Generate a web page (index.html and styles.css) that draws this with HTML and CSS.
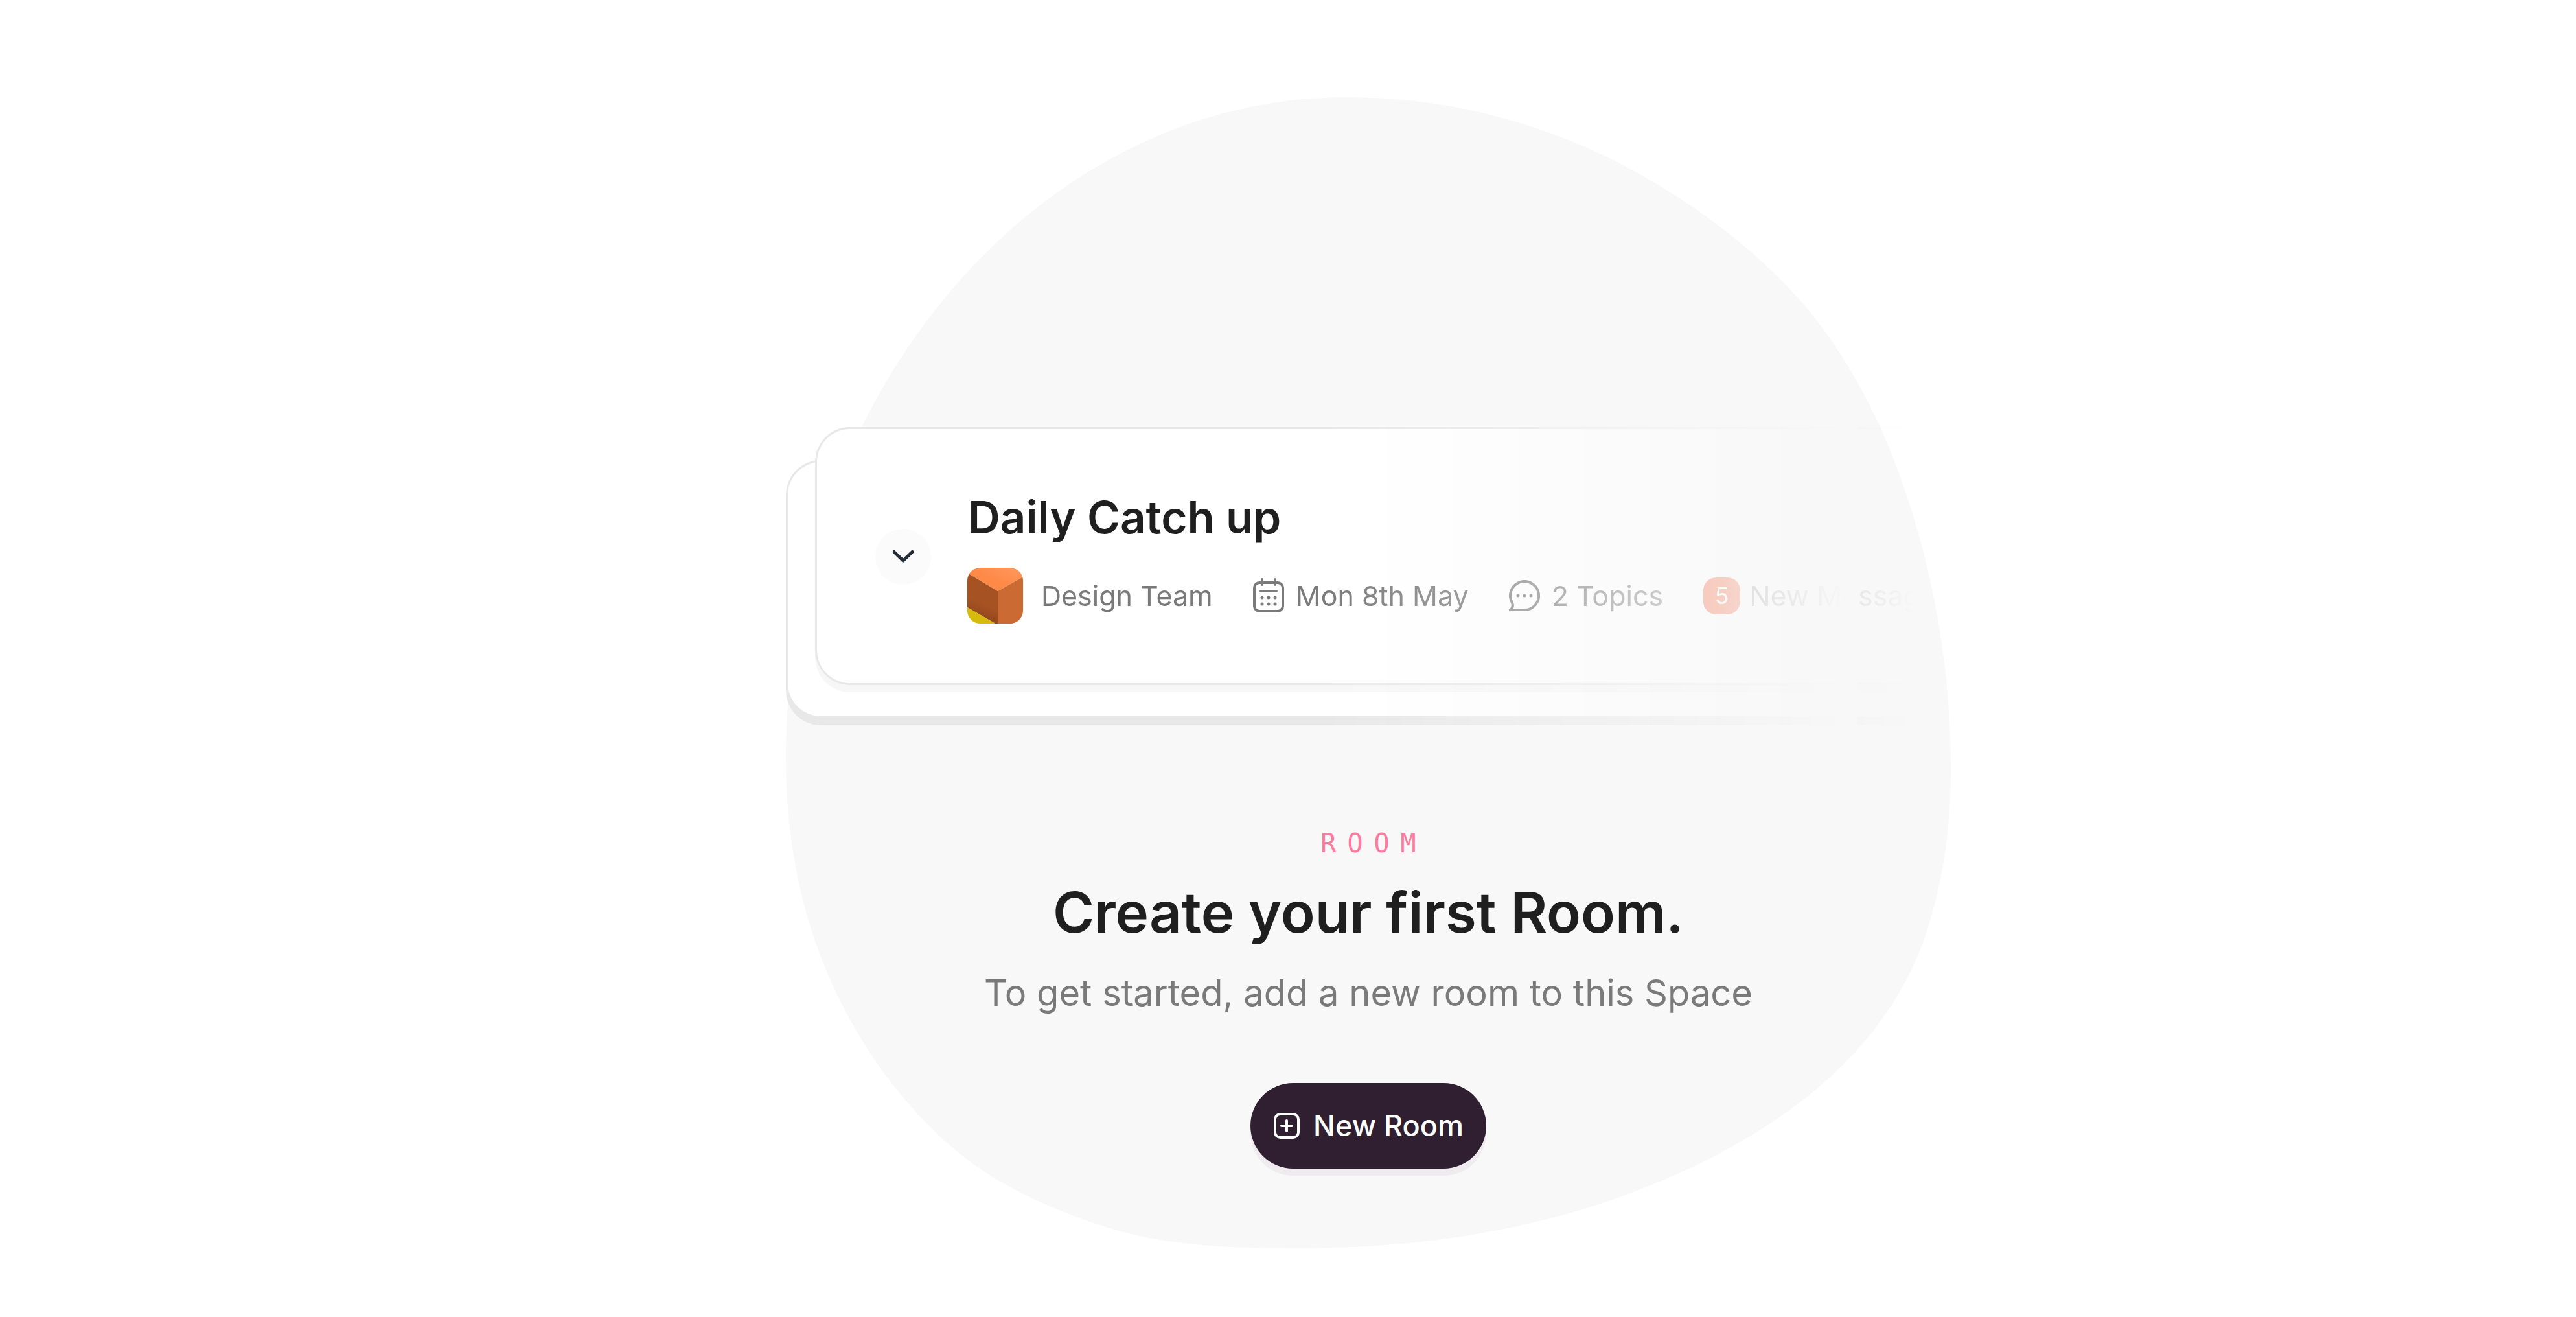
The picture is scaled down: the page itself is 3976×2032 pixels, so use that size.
FILE: index.html
```html
<!DOCTYPE html>
<html lang="en">
<head>
<meta charset="utf-8">
<title>Create your first Room</title>
<link rel="stylesheet" href="styles.css">
</head>
<body>
<main class="page">
  <section class="empty-state">
    <svg class="blob" viewBox="1213 150 1798 1776" preserveAspectRatio="none" aria-hidden="true">
      <path d="M2079 150C2225 150 2370 185 2500 252C2607 308 2708 381 2787 473C2834 529 2872 594 2903 660C2975 826 3011 1006 3011 1187C3011 1273 3000 1358 2973 1440C2940 1541 2871 1628 2787 1694C2701 1761 2603 1810 2500 1847C2341 1904 2170 1926 2001 1926C1899 1926 1797 1923 1700 1891C1616 1863 1533 1826 1467 1768C1368 1681 1295 1565 1254 1440C1226 1354 1213 1262 1213 1172C1213 608 1601 150 2079 150Z"/>
    </svg>

    <div class="stack">
      <div class="card card-back"></div>
      <article class="card card-front">
        <button class="toggle" type="button" aria-label="Expand room">
          <svg width="36" height="24" viewBox="0 0 36 24" aria-hidden="true"><path d="M4 4.500 18 18 32 4.500" fill="none" stroke="currentColor" stroke-width="5" stroke-linecap="round" stroke-linejoin="round"/></svg>
        </button>
        <div class="room">
          <h2 class="room-title">Daily Catch up</h2>
          <ul class="meta">
            <li class="meta-item team">
              <svg class="avatar" width="86" height="86" viewBox="0 0 86 86" aria-hidden="true">
                <defs>
                  <linearGradient id="side" x1="0.600" y1="0" x2="0.350" y2="1"><stop offset="0.600" stop-color="#a65223"/><stop offset="1" stop-color="#8a421b"/></linearGradient>
                  <linearGradient id="top" x1="0" y1="1" x2="1" y2="0"><stop offset="0.500" stop-color="#ff8a48"/><stop offset="1" stop-color="#ff985f"/></linearGradient>
                </defs>
                <path d="M0 0H86V14L47 36 0 8Z" fill="url(#top)"/>
                <path d="M0 8 47 36V86H43L0 61Z" fill="url(#side)"/>
                <path d="M47 36 86 14V86H47Z" fill="#cb6a33"/>
                <path d="M0 61 43 86H0Z" fill="#d6bb0c"/>
              </svg>
              Design Team
            </li>
            <li class="meta-item">
              <svg width="48" height="54" viewBox="0 0 48 54" aria-hidden="true">
                <rect x="2" y="7" width="44" height="44" rx="8" fill="none" stroke="currentColor" stroke-width="4"/>
                <path d="M14 2V10M34 2V10M12 20H36" fill="none" stroke="currentColor" stroke-width="4" stroke-linecap="round"/>
                <g fill="currentColor"><circle cx="14" cy="30" r="2.500"/><circle cx="24" cy="30" r="2.500"/><circle cx="34" cy="30" r="2.500"/><circle cx="14" cy="40" r="2.500"/><circle cx="24" cy="40" r="2.500"/><circle cx="34" cy="40" r="2.500"/></g>
              </svg>
              Mon 8th May
            </li>
            <li class="meta-item">
              <svg width="48" height="48" viewBox="0 0 48 48" aria-hidden="true">
                <path d="M2 46C6 43 7 40 5 35A22 22 0 1 1 24 46Z" fill="none" stroke="currentColor" stroke-width="4"/>
                <g fill="currentColor"><circle cx="14" cy="24" r="2.500"/><circle cx="24" cy="24" r="2.500"/><circle cx="34" cy="24" r="2.500"/></g>
              </svg>
              2 Topics
            </li>
            <li class="meta-item unread"><span class="badge">5</span>New Messages</li>
          </ul>
        </div>
      </article>
    </div>

    <p class="eyebrow">ROOM</p>
    <h1 class="headline">Create your first Room.</h1>
    <p class="lead">To get started, add a new room to this Space</p>
    <button class="new-room" type="button">
      <svg width="42" height="42" viewBox="0 0 42 42" aria-hidden="true">
        <rect x="3" y="3" width="36" height="36" rx="8" fill="none" stroke="currentColor" stroke-width="4"/>
        <path d="M21 13V29M13 21H29" fill="none" stroke="currentColor" stroke-width="4" stroke-linecap="round"/>
      </svg>
      New Room
    </button>
  </section>
</main>
</body>
</html>
```
FILE: styles.css
```css
* {
  box-sizing: border-box;
}

body {
  margin: 0;
  background: #fff;
  font-family: Inter, "Liberation Sans", sans-serif;
  color: #1f1f1f;
}

h1,
h2,
p,
ul {
  margin: 0;
  padding: 0;
}

.page {
  display: flex;
  justify-content: center;
  padding: 150px 0 104px 248px;
}

.empty-state {
  position: relative;
  display: flex;
  flex-direction: column;
  align-items: center;
  width: 100%;
  max-width: 1798px;
  padding: 509px 0 123px;
}

/* Organic backdrop behind the whole message */
.blob {
  position: absolute;
  inset: 0;
  width: 100%;
  height: 100%;
  fill: #f8f8f8;
}

.stack,
.eyebrow,
.headline,
.lead,
.new-room {
  position: relative;
}

/* The sample cards fade out towards the right edge of the backdrop */
.stack {
  display: grid;
  align-self: stretch;
  overflow: hidden;
  -webkit-mask-image: linear-gradient(90deg, #000 46%, transparent 91%, transparent 92%, rgb(0 0 0 / 12%) 92%, transparent 97%);
  mask-image: linear-gradient(90deg, #000 46%, transparent 91%, transparent 92%, rgb(0 0 0 / 12%) 92%, transparent 97%);
}

.card {
  grid-area: 1 / 1;
  min-width: 0;
  background: #fff;
  border: 3px solid #e8e8e8;
  border-right: 0;
  border-radius: 54px 0 0 54px;
}

.card-back {
  margin: 51px 0 11px;
  box-shadow: 0 11px 0 #e8e8e8;
}

.card-front {
  display: flex;
  align-items: center;
  gap: 56px;
  margin: 0 0 62px 45px;
  padding: 93px 0 92px 90px;
  box-shadow: 0 11px 0 #f7f7f7;
}

.toggle {
  display: grid;
  place-items: center;
  flex: none;
  width: 86px;
  height: 86px;
  padding: 0;
  border: 0;
  border-radius: 50%;
  background: #fbfbfb;
  color: #202b36;
}

.room {
  display: grid;
  gap: 35px;
}

.room-title {
  padding-left: 1px;
  font-size: 69px;
  font-weight: 600;
  line-height: 86px;
}

.meta {
  display: flex;
  gap: 62px;
  list-style: none;
  font-size: 43px;
  line-height: 52px;
  color: #7a7a7a;
  white-space: nowrap;
}

.meta-item {
  display: flex;
  align-items: center;
  gap: 18px;
}

.team {
  gap: 28px;
}

.unread {
  gap: 14px;
}

.avatar {
  border-radius: 20px;
}

.badge {
  display: grid;
  place-items: center;
  width: 57px;
  height: 57px;
  border-radius: 20px;
  background: #f24e1e;
  color: #fff;
  font-size: 36px;
}

.eyebrow {
  margin-top: 158px;
  padding-left: 17px;
  font-family: "DejaVu Sans Mono", monospace;
  font-size: 40px;
  line-height: 48px;
  letter-spacing: 17px;
  color: #ff7a9e;
}

.headline {
  margin-top: 33px;
  font-size: 87px;
  font-weight: 600;
  line-height: 100px;
}

.lead {
  margin-top: 40px;
  font-size: 56px;
  line-height: 68px;
  color: #7a7a7a;
}

.new-room {
  display: flex;
  align-items: center;
  gap: 20px;
  height: 132px;
  margin-top: 105px;
  padding: 0 35px;
  border: 0;
  border-radius: 66px;
  background: #301f30;
  box-shadow: 0 11px 0 #efebef;
  color: #fff;
  font: 500 45px/56px Inter, "Liberation Sans", sans-serif;
}
```
